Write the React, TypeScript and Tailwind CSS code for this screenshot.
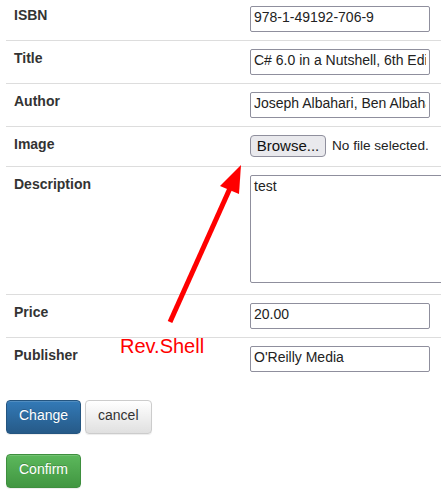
export default function App() {
  const rows: { label: string; value: string; first?: boolean }[] = [
    { label: "ISBN", value: "978-1-49192-706-9", first: true },
    { label: "Title", value: "C# 6.0 in a Nutshell, 6th Edition" },
    { label: "Author", value: "Joseph Albahari, Ben Albahari" },
  ];

  const inputCls =
    "block h-[26px] w-[180px] rounded-[2px] border border-[#8f8f9d] bg-white pt-0 pb-[5px] pl-[3px] pr-[3px] text-[14px] leading-[16px] text-[#222] outline-none font-['Liberation_Sans']";

  const btn =
    "h-[34px] rounded-[4px] border px-[12px] pb-[4px] leading-[20px] shadow-[inset_0_1px_0_rgba(255,255,255,0.15),0_1px_1px_rgba(0,0,0,0.075)]";

  return (
    <div className="relative h-[491px] w-[441px] overflow-hidden bg-white font-['Liberation_Sans',Arial,sans-serif] text-[14px] text-[#333]">
      <div className="ml-[6px] w-[470px]">
        {rows.map((r) => (
          <div
            key={r.label}
            className={r.first ? "flex" : "flex border-t border-[#ddd]"}
          >
            <div
              className={
                "w-[236px] px-[8px] pb-[8px] font-bold leading-[18px] " +
                (r.first ? "pt-[6px]" : "pt-[8px]")
              }
            >
              {r.label}
            </div>
            <div className={"px-[8px] pb-[8px] " + (r.first ? "pt-[6px]" : "pt-[8px]")}>
              <input className={inputCls} defaultValue={r.value} readOnly />
            </div>
          </div>
        ))}

        <div className="flex border-t border-[#ddd]">
          <div className="w-[236px] p-[8px] font-bold leading-[18px]">Image</div>
          <div className="p-[8px]">
            <div className="flex h-[23px] items-start">
              <span className="flex h-[22px] w-[76px] items-center justify-center rounded-[4px] border border-[#8f8f9d] bg-[#e9e9ed] text-[15px] text-[#111]">
                Browse...
              </span>
              <span className="ml-[6px] mt-[3px] text-[13.6px] leading-[16px] text-[#222]">
                No file selected.
              </span>
            </div>
          </div>
        </div>

        <div className="flex border-t border-[#ddd]">
          <div className="w-[236px] p-[8px] font-bold leading-[18px]">Description</div>
          <div className="p-[8px]">
            <div className="h-[111px]">
              <textarea
                className="block h-[108px] w-[200px] resize-none rounded-[2px] border border-[#8f8f9d] bg-white px-[3px] pt-[2px] text-[14px] leading-[16px] text-[#222] outline-none font-['Liberation_Sans']"
                defaultValue="test"
                readOnly
              />
            </div>
          </div>
        </div>

        <div className="flex border-t border-[#ddd]">
          <div className="w-[236px] p-[8px] font-bold leading-[18px]">Price</div>
          <div className="p-[8px]">
            <input className={inputCls} defaultValue="20.00" readOnly />
          </div>
        </div>

        <div className="flex border-t border-[#ddd]">
          <div className="w-[236px] p-[8px] font-bold leading-[18px]">Publisher</div>
          <div className="p-[8px]">
            <input className={inputCls} defaultValue="O'Reilly Media" readOnly />
          </div>
        </div>
      </div>

      <div className="ml-[6px] mt-[20px] flex gap-[4px]">
        <button className={btn + " border-[#245580] bg-linear-to-b from-[#337ab7] to-[#265a88] text-white [text-shadow:0_-1px_0_rgba(0,0,0,0.2)]"}>
          Change
        </button>
        <button className={btn + " border-[#ccc] bg-linear-to-b from-white to-[#e0e0e0] text-[#333]"}>
          cancel
        </button>
      </div>

      <div className="ml-[6px] mt-[20px]">
        <button className={btn + " border-[#3e8f3e] bg-linear-to-b from-[#5cb85c] to-[#419641] text-white [text-shadow:0_-1px_0_rgba(0,0,0,0.2)]"}>
          Confirm
        </button>
      </div>

      {/* annotation drawn over the page */}
      <svg
        className="pointer-events-none absolute left-0 top-0"
        width="441"
        height="491"
        viewBox="0 0 441 491"
      >
        <line x1="170" y1="322" x2="231" y2="186" stroke="#ff0000" strokeWidth="5" />
        <polygon points="241,165 220,186 239,194" fill="#ff0000" />
      </svg>
      <div className="absolute left-[120px] top-[336px] text-[20px] leading-[20px] text-[#ff0000]">
        Rev.Shell
      </div>
    </div>
  );
}
